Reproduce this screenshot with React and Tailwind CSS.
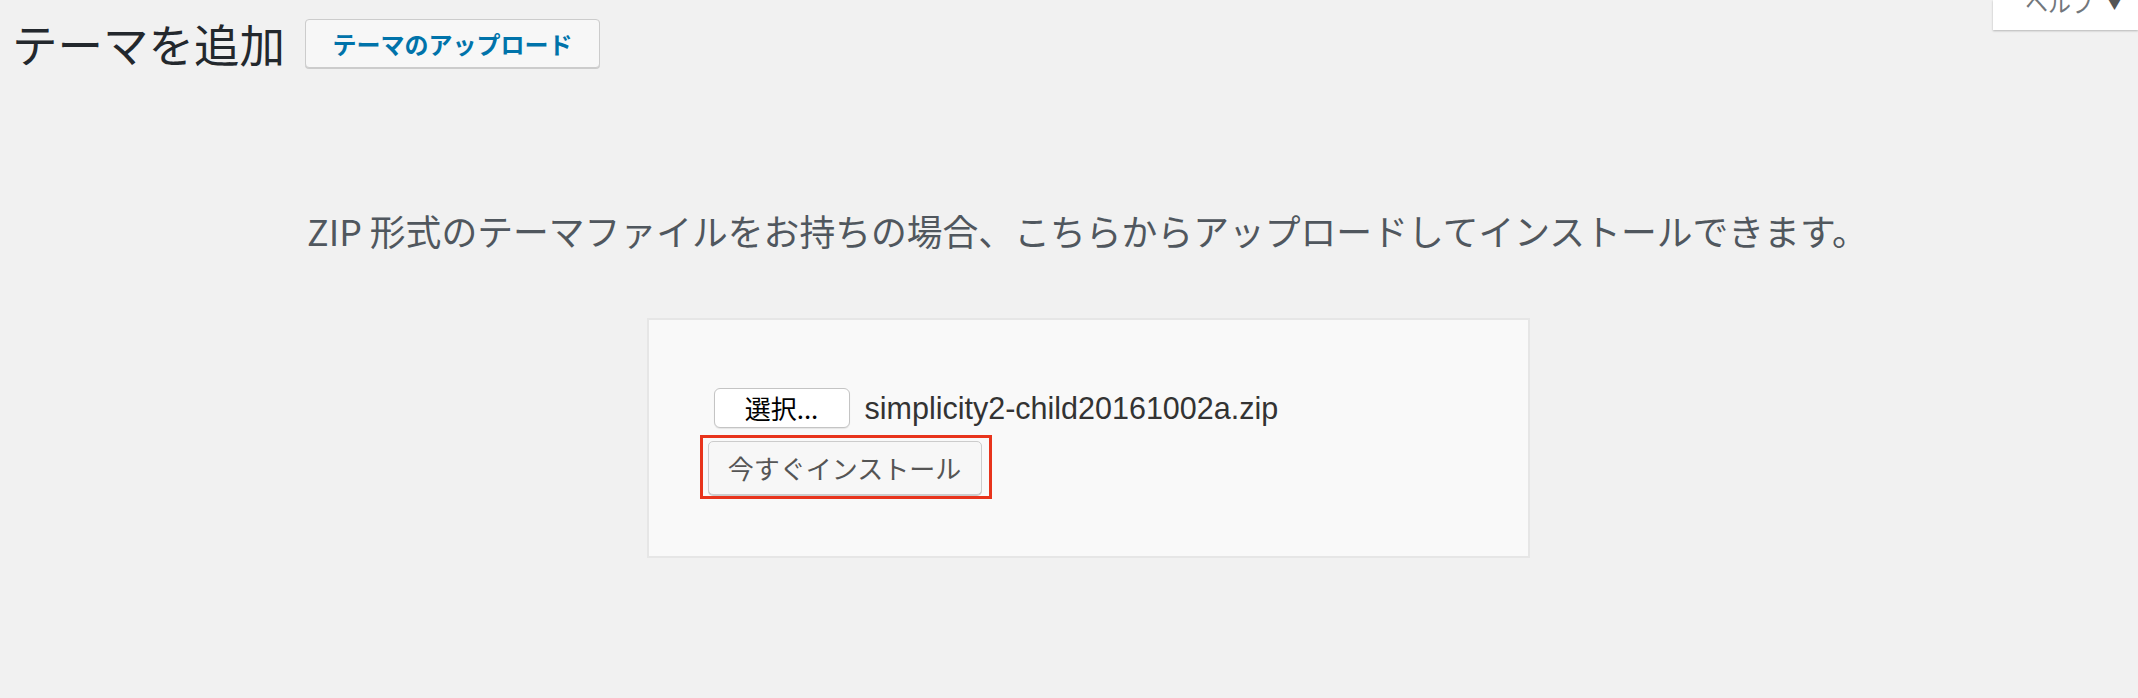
export default function App() {
  return (
    <div className="relative min-h-[698px] bg-[#f1f1f1] font-['Noto_Sans_CJK_JP',sans-serif]">
      {/* screen meta tab */}
      <div className="absolute top-0 right-0 h-[30px] w-[145px] overflow-hidden bg-white shadow-[0_1px_2px_rgba(0,0,0,0.25)]">
        <div className="-mt-[13px] flex items-center pl-[32px] text-[23px] leading-[30px] text-[#72777c] whitespace-nowrap">
          ヘルプ<span className="ml-[12px] text-[17px] text-[#555]">▼</span>
        </div>
      </div>

      <div className="flex items-center gap-[20px] pl-[12px] pt-[19px]">
        <h1 className="text-[45.5px] leading-[49px] text-[#23282d]">テーマを追加</h1>
        <button className="h-[49px] w-[295px] rounded-[4px] border border-[#cccccc] bg-[#f7f7f7] text-[24px] font-bold text-[#0073aa] shadow-[0_1px_0_#cccccc]">
          テーマのアップロード
        </button>
      </div>

      <p className="mt-[142px] pl-[37px] text-center text-[35.8px] leading-[40px] text-[#50575e]">
        ZIP 形式のテーマファイルをお持ちの場合、こちらからアップロードしてインストールできます。
      </p>

      <div className="mt-[68px] flex justify-center pl-[38px]">
        <div className="h-[240px] w-[883px] border-2 border-[#e6e6e6] bg-[#f9f9f9] pl-[51px] pt-[68px]">
          <div className="flex items-center gap-[15px] pl-[14px]">
            <button className="h-[40px] w-[136px] rounded-[6px] border border-[#c4c4c4] bg-white text-[26px] leading-none text-black shadow-[0_1px_1px_rgba(0,0,0,0.08)]">
              選択...
            </button>
            <span className="font-['Liberation_Sans',sans-serif] text-[30.5px] leading-none text-[#333]">
              simplicity2-child20161002a.zip
            </span>
          </div>
          <div className="mt-[7px] flex w-[292px] border-[3px] border-[#e8341c] pb-[1px] pl-[5px] pt-[3px]">
            <button className="h-[54px] w-[274px] rounded-[5px] border border-[#cccccc] bg-[#f7f7f7] text-[26px] leading-none text-[#555555] shadow-[0_1px_0_#cccccc]">
              今すぐインストール
            </button>
          </div>
        </div>
      </div>
    </div>
  );
}
